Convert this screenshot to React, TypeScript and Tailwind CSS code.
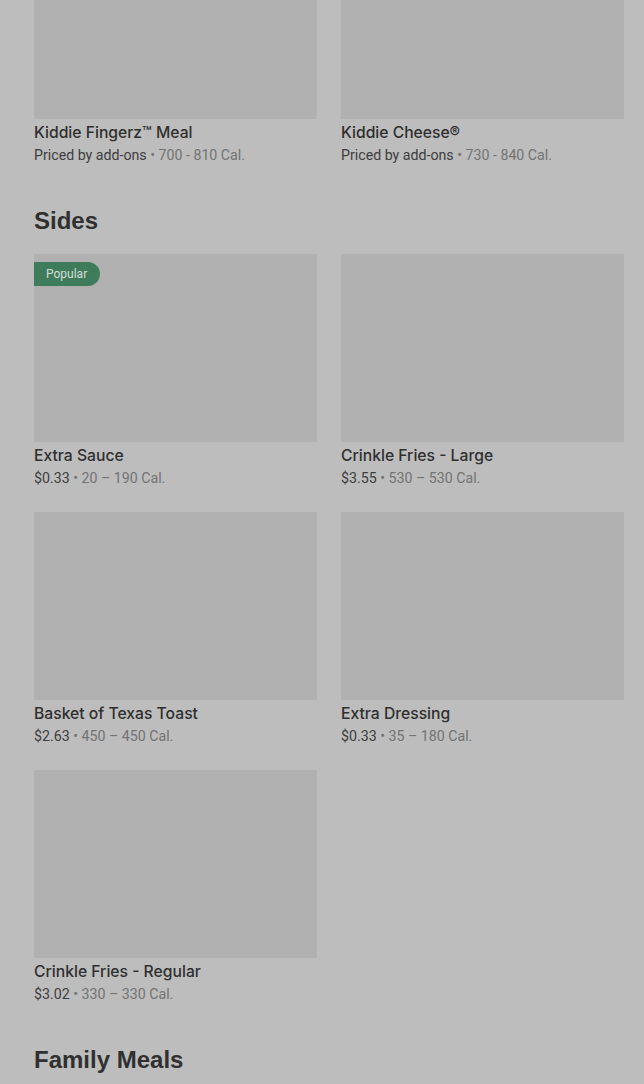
type Item = {
  name: string;
  price: string;
  cal: string;
  popular?: boolean;
};

const kids: Item[] = [
  { name: 'Kiddie Fingerz™ Meal', price: 'Priced by add-ons', cal: '700 - 810 Cal.' },
  { name: 'Kiddie Cheese®', price: 'Priced by add-ons', cal: '730 - 840 Cal.' },
];

const sides: Item[] = [
  { name: 'Extra Sauce', price: '$0.33', cal: '20 – 190 Cal.', popular: true },
  { name: 'Crinkle Fries - Large', price: '$3.55', cal: '530 – 530 Cal.' },
  { name: 'Basket of Texas Toast', price: '$2.63', cal: '450 – 450 Cal.' },
  { name: 'Extra Dressing', price: '$0.33', cal: '35 – 180 Cal.' },
  { name: 'Crinkle Fries - Regular', price: '$3.02', cal: '330 – 330 Cal.' },
];

function Card({ item }: { item: Item }) {
  return (
    <div className="flex flex-col">
      <div className="relative h-[188px] bg-[#b1b1b1]">
        {item.popular && (
          <span className="absolute left-0 top-[8px] flex h-[24px] items-center rounded-r-full bg-[#3f7c5c] pl-[12px] pr-[13px] text-[12px] text-[#d3ddd7]">
            Popular
          </span>
        )}
      </div>
      <div className="mt-[4px] font-['Inter',sans-serif] text-[15.7px] leading-[20px] font-medium text-[#2f2f2f]">
        {item.name}
      </div>
      <div className="mt-[2px] text-[14.2px] leading-[20px]">
        <span className="text-[#3e3e3e]">{item.price}</span>
        <span className="text-[#737373]"> • {item.cal}</span>
      </div>
    </div>
  );
}

function Grid({ items }: { items: Item[] }) {
  return (
    <div className="grid grid-cols-2 gap-x-[24px] gap-y-[24px]">
      {items.map((item) => (
        <Card key={item.name} item={item} />
      ))}
    </div>
  );
}

function Heading({ children }: { children: React.ReactNode }) {
  return (
    <h2 className="mt-[40px] mb-[17px] font-['Liberation_Sans',Arial,sans-serif] text-[24px] leading-[32px] font-bold text-[#303030]">
      {children}
    </h2>
  );
}

export default function App() {
  return (
    <div className="min-h-[1084px] overflow-hidden bg-[#bdbdbd] font-['Roboto',sans-serif]">
      <div className="-mt-[69px] pl-[34px] pr-[20px]">
        <Grid items={kids} />
        <Heading>Sides</Heading>
        <Grid items={sides} />
        <Heading>Family Meals</Heading>
      </div>
    </div>
  );
}
